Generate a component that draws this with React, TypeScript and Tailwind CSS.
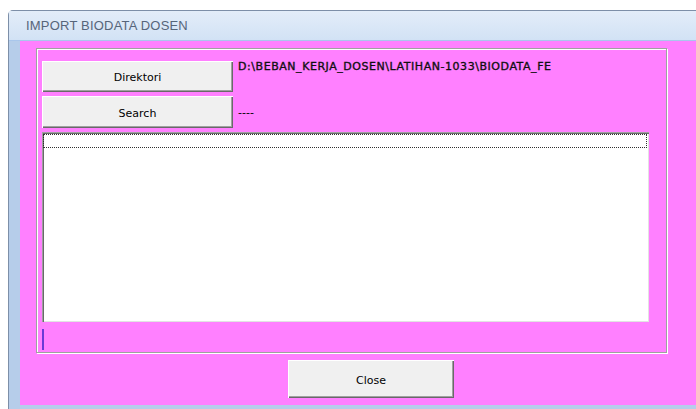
import React from "react";

const face = "bg-[#f0f0f0] shadow-[inset_1px_1px_0_#ffffff,inset_-1px_-1px_0_#696969,inset_-2px_-2px_0_#a0a0a0]";

function WinButton({ label, className }: { label: string; className: string }) {
  return (
    <button className={`${face} ${className} flex items-center justify-center pt-[4px] text-[11px] text-black`}>
      {label}
    </button>
  );
}

export default function App() {
  return (
    <div className="w-[696px] h-[409px] bg-white overflow-hidden font-['DejaVu_Sans',sans-serif]">
      <div className="ml-[8px] mt-[10px] h-[399px] rounded-tl-[5px] border-l border-t border-[#7d8fa8] bg-[#b6cdea] flex flex-col">
        {/* caption bar */}
        <div className="h-[30px] shrink-0 bg-gradient-to-b from-[#e3edf9] to-[#d2e2f5] border-b border-[#a9c6ec] flex items-center pl-[17px]">
          <span className="font-['Liberation_Sans',sans-serif] text-[13px] text-[#56657a] tracking-[0.2px]">
            IMPORT BIODATA DOSEN
          </span>
        </div>
        <div className="flex-1 pl-[11px]">
          <div className="h-[364px] bg-[#ff80ff] pl-[16px] pt-[7px]">
            {/* group frame */}
            <div className="w-[631px] h-[305px] border border-[#a0a0a0] shadow-[inset_1px_1px_0_#ffffff,1px_1px_0_#ffffff] pl-[5px] pt-[12px]">
              <div className="flex gap-[5px]">
                <WinButton label="Direktori" className="w-[191px] h-[31px]" />
                <span className="text-[11px] text-[#101010] [-webkit-text-stroke:0.35px_#101010] -mt-[2px] tracking-[0.55px]">
                  D:\BEBAN_KERJA_DOSEN\LATIHAN-1033\BIODATA_FE
                </span>
              </div>
              <div className="flex items-center gap-[5px] mt-[4px]">
                <WinButton label="Search" className="w-[191px] h-[32px]" />
                <span className="text-[11px] text-black pt-[3px]">----</span>
              </div>
              {/* file list */}
              <div className="mt-[4px] w-[607px] h-[190px] bg-white shadow-[inset_1px_1px_0_#a0a0a0,inset_2px_2px_0_#696969,inset_-1px_-1px_0_#e3e3e3] pt-[2px] pl-[1px]">
                <div className="w-[604px] h-[14px] border border-dotted border-[#303030]" />
              </div>
              <div className="mt-[7px] w-[2px] h-[21px] bg-[#6a3ad6]" />
            </div>
            <WinButton label="Close" className="ml-[252px] mt-[7px] w-[166px] h-[38px]" />
          </div>
        </div>
      </div>
    </div>
  );
}
